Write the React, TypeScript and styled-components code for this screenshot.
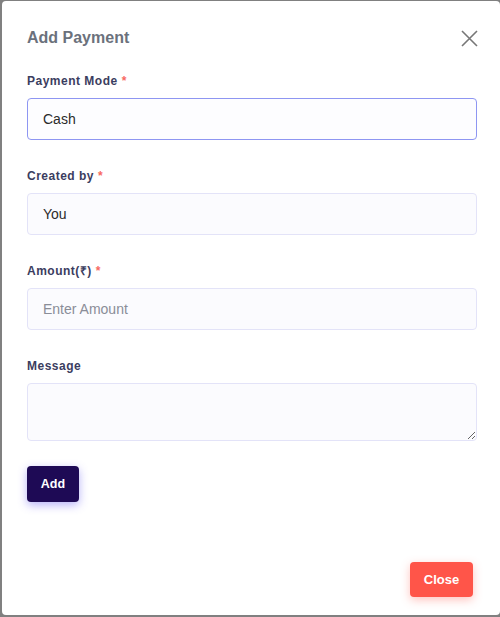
import React from "react";
import styled, { createGlobalStyle } from "styled-components";

const GlobalStyle = createGlobalStyle`
    html, body {
        margin: 0;
        padding: 0;
        background: #808080;
        font-family: "Liberation Sans", Arial, sans-serif;
    }
    * {
        box-sizing: border-box;
    }
`;

const Backdrop = styled.div`
    width: 500px;
    height: 617px;
    padding: 1px 0 2px 2px;
    background: #808080;
`;

const Modal = styled.div`
    height: 614px;
    background: #fff;
    border-radius: 4px;
    display: flex;
    flex-direction: column;
`;

const Header = styled.div`
    display: flex;
    align-items: center;
    justify-content: space-between;
    padding: 25px 22px 0 25px;
`;

const Title = styled.h2`
    margin: 0;
    font-size: 16px;
    line-height: 24px;
    font-weight: 700;
    color: #6b717c;
`;

const CloseIcon = styled.button`
    border: none;
    background: none;
    padding: 0;
    width: 18px;
    height: 18px;
    cursor: pointer;
    display: flex;
    align-items: center;
    justify-content: center;
`;

const Body = styled.form`
    padding: 22px 23px 0 25px;
    display: flex;
    flex-direction: column;
`;

const Field = styled.div`
    display: flex;
    flex-direction: column;
    margin-bottom: 27px;
`;

const Label = styled.label`
    font-size: 12px;
    line-height: 18px;
    font-weight: 700;
    letter-spacing: 0.5px;
    color: #3b3d60;
    margin-bottom: 8px;
`;

const Star = styled.span`
    color: #f86a62;
    margin-left: 4px;
    font-size: 12px;
`;

const Input = styled.input<{ focused?: boolean }>`
    width: 450px;
    height: 42px;
    padding: 0 15px;
    font-family: "Liberation Sans", Arial, sans-serif;
    font-size: 14px;
    color: #2b2b2b;
    background: ${p => (p.focused ? "#fdfdff" : "#fbfbfe")};
    border: 1px solid ${p => (p.focused ? "#8e96f2" : "#e3e3f8")};
    border-radius: 4px;
    outline: none;
    &::placeholder {
        color: #8a8d98;
    }
`;

const TextArea = styled.textarea`
    width: 450px;
    height: 58px;
    padding: 10px 15px;
    font-family: "Liberation Sans", Arial, sans-serif;
    font-size: 14px;
    background: #fbfbfe;
    border: 1px solid #e3e3f8;
    border-radius: 4px;
    outline: none;
    display: block;
`;

const Button = styled.button<{ bgColor: string; glow: string }>`
    border: none;
    border-radius: 4px;
    background: ${p => p.bgColor};
    color: #fff;
    font-family: "Liberation Sans", Arial, sans-serif;
    font-size: 13px;
    font-weight: 700;
    cursor: pointer;
    box-shadow: 0 3px 10px ${p => p.glow};
`;

const AddButton = styled(Button)`
    width: 52px;
    height: 36px;
    margin-top: -2px;
    align-self: flex-start;
    font-size: 12.5px;
`;

const Footer = styled.div`
    margin-top: auto;
    display: flex;
    justify-content: flex-end;
    padding: 0 27px 18px 0;
`;

const CloseButton = styled(Button)`
    width: 63px;
    height: 35px;
`;

function App() {
    return (
        <>
            <GlobalStyle />
            <Backdrop>
                <Modal>
                    <Header>
                        <Title>Add Payment</Title>
                        <CloseIcon aria-label="close">
                            <svg width="17" height="17" viewBox="0 0 17 17">
                                <path d="M1 1L16 16M16 1L1 16" stroke="#777" strokeWidth="1.6" />
                            </svg>
                        </CloseIcon>
                    </Header>
                    <Body>
                        <Field>
                            <Label>Payment Mode<Star>*</Star></Label>
                            <Input focused defaultValue="Cash" />
                        </Field>
                        <Field>
                            <Label>Created by<Star>*</Star></Label>
                            <Input defaultValue="You" />
                        </Field>
                        <Field>
                            <Label>Amount(₹)<Star>*</Star></Label>
                            <Input placeholder="Enter Amount" />
                        </Field>
                        <Field>
                            <Label>Message</Label>
                            <TextArea />
                        </Field>
                        <AddButton type="button" bgColor="#1e0a55" glow="rgba(95, 85, 240, 0.45)">Add</AddButton>
                    </Body>
                    <Footer>
                        <CloseButton type="button" bgColor="#ff5549" glow="rgba(255, 85, 73, 0.35)">Close</CloseButton>
                    </Footer>
                </Modal>
            </Backdrop>
        </>
    );
}

export default App;
